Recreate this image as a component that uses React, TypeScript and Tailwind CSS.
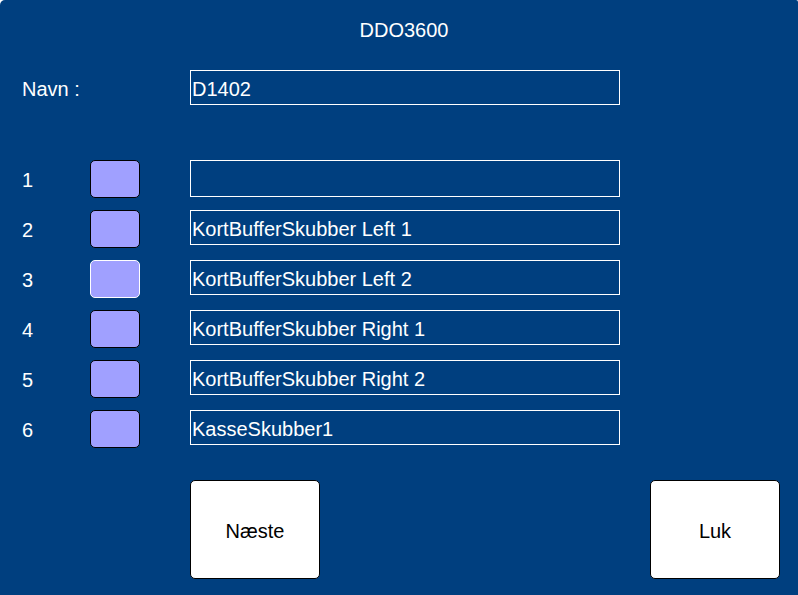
import React from "react";

const rows = [
  { n: "1", text: "", h: "h-[37px]", focus: false },
  { n: "2", text: "KortBufferSkubber Left 1", h: "h-[35px]", focus: false },
  { n: "3", text: "KortBufferSkubber Left 2", h: "h-[35px]", focus: true },
  { n: "4", text: "KortBufferSkubber Right 1", h: "h-[35px]", focus: false },
  { n: "5", text: "KortBufferSkubber Right 2", h: "h-[35px]", focus: false },
  { n: "6", text: "KasseSkubber1", h: "h-[35px]", focus: false },
];

export default function App() {
  return (
    <div className="w-[798px] h-[595px] bg-white overflow-hidden">
      <div
        className="w-full h-full bg-[#003f7f] rounded-tl-[5px] rounded-tr-[2px] flex flex-col text-white text-[20px] leading-none"
        style={{ fontFamily: '"Liberation Sans", Arial, sans-serif' }}
      >
        <div className="h-[58px] flex items-center justify-center pt-[2px] pl-[10px]">DDO3600</div>
        <div className="mt-[12px] h-[35px] flex items-center">
          <div className="w-[190px] pl-[22px] pt-[2px]">Navn :</div>
          <div className="w-[430px] h-[35px] border border-white flex items-center pl-[1px] pt-[2px]">D1402</div>
        </div>
        <div className="mt-[55px] flex flex-col gap-[12px]">
          {rows.map((r) => (
            <div key={r.n} className="h-[38px] flex items-start">
              <div className="w-[90px] pl-[22px] h-[38px] flex items-center pt-[2px]">{r.n}</div>
              <div
                className={
                  "w-[50px] h-[38px] rounded-[5px] bg-[#a0a0ff] border " +
                  (r.focus ? "border-white" : "border-black")
                }
              />
              <div
                className={
                  "ml-[50px] w-[430px] border border-white flex items-center pl-[1px] pt-[2px] " + r.h
                }
              >
                {r.text}
              </div>
            </div>
          ))}
        </div>
        <div className="mt-[32px] flex">
          <button className="ml-[190px] w-[130px] h-[99px] bg-white border border-black rounded-[5px] text-black flex items-center justify-center pt-[2px]">
            Næste
          </button>
          <button className="ml-[330px] w-[130px] h-[99px] bg-white border border-black rounded-[5px] text-black flex items-center justify-center pt-[2px]">
            Luk
          </button>
        </div>
      </div>
    </div>
  );
}
